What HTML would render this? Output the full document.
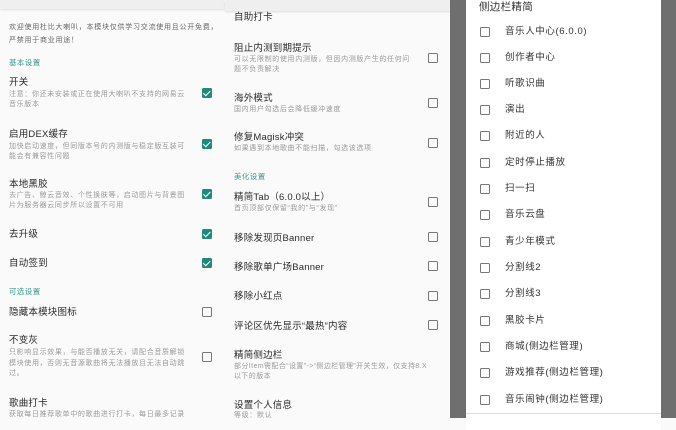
<!DOCTYPE html>
<html><head><meta charset="utf-8"><style>
*{margin:0;padding:0;box-sizing:border-box}
body{width:676px;height:418px;overflow:hidden;background:#fafafa;position:relative;font-family:"Liberation Sans","Noto Sans CJK SC",sans-serif}
.p{position:absolute;white-space:nowrap}
.t{font-size:9.5px;color:#2a2a2a;line-height:11px;letter-spacing:.2px}
.s{font-size:7px;color:#9a9a9a;line-height:10px;letter-spacing:.65px}
.h{font-size:7.5px;color:#3a9a8e;line-height:10px;letter-spacing:.4px}
.cb{position:absolute;width:10px;height:10px;border:1.3px solid #777;border-radius:1.5px}
.ck{position:absolute;width:10px;height:10px;background:#1e8a7a;border-radius:1.5px}
.ck:after{content:"";position:absolute;left:2.5px;top:1px;width:3px;height:5.5px;border:solid #fff;border-width:0 1.4px 1.4px 0;transform:rotate(45deg)}
.bar{position:absolute;top:0;height:9px;background:#efefef;box-shadow:0 1px 2px rgba(0,0,0,.12)}
.d{font-size:9.5px;color:#333;line-height:11px;letter-spacing:.6px}
</style></head><body>
<div class="bar" style="left:0;width:224px"></div>
<div class="bar" style="left:225px;width:225px;height:11px"></div>

<div class="p s" style="left:9px;top:21px;line-height:13px;color:#666;letter-spacing:.75px">欢迎使用杜比大喇叭，本模块仅供学习交流使用且公开免费，<br>严禁用于商业用途！</div>
<div class="p h" style="left:9px;top:58px">基本设置</div>
<div class="p t" style="left:9px;top:77px">开关</div>
<div class="p s" style="left:9px;top:90px">注意：你还未安装或正在使用大喇叭不支持的网易云<br>音乐版本</div>
<div class="ck" style="left:202px;top:88px"></div>
<div class="p t" style="left:9px;top:129px">启用DEX缓存</div>
<div class="p s" style="left:9px;top:142px">加快启动速度，但同版本号的内测版与稳定版互装可<br>能会有兼容性问题</div>
<div class="ck" style="left:202px;top:139px"></div>
<div class="p t" style="left:9px;top:179px">本地黑胶</div>
<div class="p s" style="left:9px;top:191px">去广告、鲸云音效、个性换肤等，启动图片与背景图<br>片为服务器云同步所以设置不可用</div>
<div class="ck" style="left:202px;top:189px"></div>
<div class="p t" style="left:9px;top:229px">去升级</div>
<div class="ck" style="left:202px;top:229px"></div>
<div class="p t" style="left:9px;top:258px">自动签到</div>
<div class="ck" style="left:202px;top:258px"></div>
<div class="p h" style="left:9px;top:287px">可选设置</div>
<div class="p t" style="left:9px;top:307px">隐藏本模块图标</div>
<div class="cb" style="left:202px;top:307px"></div>
<div class="p t" style="left:9px;top:335px">不变灰</div>
<div class="p s" style="left:9px;top:348px;line-height:10.5px">只影响显示效果，与能否播放无关，请配合音质解锁<br>模块使用，否则无音源歌曲将无法播放且无法自动跳<br>过。</div>
<div class="cb" style="left:202px;top:352px"></div>
<div class="p t" style="left:9px;top:398px">歌曲打卡</div>
<div class="p s" style="left:9px;top:410px">获取每日推荐歌单中的歌曲进行打卡，每日最多记录</div>

<div class="p t" style="left:234px;top:12px">自助打卡</div>
<div class="p t" style="left:234px;top:43px">阻止内测到期提示</div>
<div class="p s" style="left:234px;top:55px">可以无限制的使用内测版，但因内测版产生的任何问<br>题不负责解决</div>
<div class="cb" style="left:428px;top:53px"></div>
<div class="p t" style="left:234px;top:93px">海外模式</div>
<div class="p s" style="left:234px;top:105px">国内用户勾选后会降低缓冲速度</div>
<div class="cb" style="left:428px;top:98px"></div>
<div class="p t" style="left:234px;top:132px">修复Magisk冲突</div>
<div class="p s" style="left:234px;top:144px">如果遇到本地歌曲不能扫描，勾选该选项</div>
<div class="cb" style="left:428px;top:138px"></div>
<div class="p h" style="left:234px;top:172px">美化设置</div>
<div class="p t" style="left:234px;top:192px">精简Tab（6.0.0以上）</div>
<div class="p s" style="left:234px;top:204px">首页顶部仅保留“我的”与“发现”</div>
<div class="cb" style="left:428px;top:197px"></div>
<div class="p t" style="left:234px;top:233px">移除发现页Banner</div>
<div class="cb" style="left:428px;top:232px"></div>
<div class="p t" style="left:234px;top:262px">移除歌单广场Banner</div>
<div class="cb" style="left:428px;top:261px"></div>
<div class="p t" style="left:234px;top:291px">移除小红点</div>
<div class="cb" style="left:428px;top:291px"></div>
<div class="p t" style="left:234px;top:321px">评论区优先显示“最热”内容</div>
<div class="cb" style="left:428px;top:320px"></div>
<div class="p t" style="left:234px;top:350px">精简侧边栏</div>
<div class="p s" style="left:234px;top:362px;letter-spacing:.4px">部分Item需配合“设置”->“侧边栏管理”开关生效，仅支持8.X<br>以下的版本</div>
<div class="p t" style="left:234px;top:400px">设置个人信息</div>
<div class="p s" style="left:234px;top:411px">等级：默认</div>

<div style="position:absolute;left:450px;top:0;width:226px;height:418px;background:#6f6f6f"></div>
<div style="position:absolute;left:466px;top:-10px;width:195px;height:440px;background:#fff"></div>
<div style="position:absolute;left:466px;top:413px;width:195px;height:1px;background:#ddd"></div>
<div class="p" style="left:479px;top:1px;font-size:10.5px;color:#333;line-height:13px;letter-spacing:.3px">侧边栏精简</div>
<div class="cb" style="left:480px;top:27px"></div><div class="p d" style="left:505px;top:26px">音乐人中心(6.0.0)</div>
<div class="cb" style="left:480px;top:53px"></div><div class="p d" style="left:505px;top:52px">创作者中心</div>
<div class="cb" style="left:480px;top:79px"></div><div class="p d" style="left:505px;top:78px">听歌识曲</div>
<div class="cb" style="left:480px;top:105px"></div><div class="p d" style="left:505px;top:104px">演出</div>
<div class="cb" style="left:480px;top:131px"></div><div class="p d" style="left:505px;top:130px">附近的人</div>
<div class="cb" style="left:480px;top:158px"></div><div class="p d" style="left:505px;top:157px">定时停止播放</div>
<div class="cb" style="left:480px;top:184px"></div><div class="p d" style="left:505px;top:183px">扫一扫</div>
<div class="cb" style="left:480px;top:210px"></div><div class="p d" style="left:505px;top:209px">音乐云盘</div>
<div class="cb" style="left:480px;top:237px"></div><div class="p d" style="left:505px;top:236px">青少年模式</div>
<div class="cb" style="left:480px;top:263px"></div><div class="p d" style="left:505px;top:262px">分割线2</div>
<div class="cb" style="left:480px;top:289px"></div><div class="p d" style="left:505px;top:288px">分割线3</div>
<div class="cb" style="left:480px;top:316px"></div><div class="p d" style="left:505px;top:315px">黑胶卡片</div>
<div class="cb" style="left:480px;top:342px"></div><div class="p d" style="left:505px;top:341px">商城(侧边栏管理)</div>
<div class="cb" style="left:480px;top:368px"></div><div class="p d" style="left:505px;top:367px">游戏推荐(侧边栏管理)</div>
<div class="cb" style="left:480px;top:395px"></div><div class="p d" style="left:505px;top:394px">音乐闹钟(侧边栏管理)</div>
</body></html>
